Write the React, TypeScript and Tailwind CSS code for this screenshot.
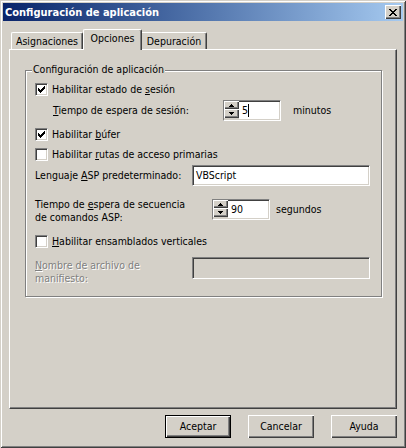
import React from 'react'

const sunken =
  'border border-t-[#808080] border-l-[#808080] border-b-white border-r-white shadow-[inset_1px_1px_0_#404040,inset_-1px_-1px_0_#d4d0c8]'
const raised =
  'shadow-[inset_1px_1px_0_#ffffff,inset_-1px_-1px_0_#404040,inset_-2px_-2px_0_#808080]'

function CheckBox({ checked }: { checked?: boolean }) {
  return (
    <span className={`w-[13px] h-[13px] shrink-0 bg-white flex items-center justify-center ${sunken}`}>
      {checked && (
        <svg width="7" height="7" viewBox="0 0 7 7" shapeRendering="crispEdges">
          <path
            d="M0 2h1v3H0zM1 3h1v3H1zM2 4h1v3H2zM3 3h1v3H3zM4 2h1v3H4zM5 1h1v3H5zM6 0h1v3H6z"
            fill="#000"
          />
        </svg>
      )}
    </span>
  )
}

function Arrow({ up }: { up?: boolean }) {
  return (
    <svg width="5" height="3" viewBox="0 0 5 3" shapeRendering="crispEdges">
      <path d={up ? 'M2 0h1v1H2zM1 1h3v1H1zM0 2h5v1H0z' : 'M0 0h5v1H0zM1 1h3v1H1zM2 2h1v1H2z'} fill="#000" />
    </svg>
  )
}

function Spinner({ value, caret }: { value: string; caret?: boolean }) {
  return (
    <div className={`w-[58px] h-[21px] shrink-0 bg-white flex ${sunken}`}>
      <div className="w-[15px] flex flex-col bg-[#d4d0c8]">
        <div className={`h-[8px] flex items-center justify-center ${raised}`}>
          <Arrow up />
        </div>
        <div className={`h-[9px] flex items-center justify-center ${raised}`}>
          <Arrow />
        </div>
      </div>
      <div className="flex items-center pl-[3px]">
        <span>{value}</span>
        {caret && <span className="w-px h-[13px] bg-black" />}
      </div>
    </div>
  )
}

function Check({ checked, children }: { checked?: boolean; children: React.ReactNode }) {
  return (
    <div className="h-[13px] flex items-center gap-[4px]">
      <CheckBox checked={checked} />
      <span>{children}</span>
    </div>
  )
}

function Button({ label, primary }: { label: string; primary?: boolean }) {
  return (
    <div
      className={`w-[66px] h-[23px] flex items-center justify-center ${
        primary ? 'border border-black' : ''
      } ${raised}`}>
      {label}
    </div>
  )
}

export default function App() {
  return (
    <div className="w-[406px] h-[448px] bg-[#d4d0c8] p-[3px] flex flex-col text-[10.5px] leading-[13px] text-black font-['DejaVu_Sans_Condensed','Liberation_Sans',Arial,sans-serif] shadow-[inset_1px_1px_0_#d4d0c8,inset_-1px_-1px_0_#404040,inset_2px_2px_0_#ffffff,inset_-2px_-2px_0_#808080]">
      {/* Title bar */}
      <div className="h-[18px] flex items-center justify-between pl-[2px] pr-[2px] bg-gradient-to-r from-[#0a246a] to-[#a6caf0]">
        <span className="text-white font-bold text-[11px]">Configuración de aplicación</span>
        <div className={`w-[16px] h-[14px] bg-[#d4d0c8] flex items-center justify-center ${raised}`}>
          <svg width="8" height="7" viewBox="0 0 8 7" shapeRendering="crispEdges">
            <path
              d="M0 0h2v1H0zM6 0h2v1H6zM1 1h2v1H1zM5 1h2v1H5zM2 2h4v1H2zM3 3h2v1H3zM2 4h4v1H2zM1 5h2v1H1zM5 5h2v1H5zM0 6h2v1H0zM6 6h2v1H6z"
              fill="#000"
            />
          </svg>
        </div>
      </div>

      {/* Tabs */}
      <div className="mt-[8px] ml-[8px] h-[20px] flex items-end">
        <div className="w-[72px] h-[17px] pt-[2px] flex justify-center border-l border-t border-white border-r border-r-[#404040] rounded-t-[2px] shadow-[inset_-1px_0_0_#808080]">
          Asignaciones
        </div>
        <div className="relative z-10 w-[59px] h-[21px] -mb-px pt-[2px] flex justify-center bg-[#d4d0c8] border-l border-t border-white border-r border-r-[#404040] rounded-t-[2px] shadow-[inset_-1px_0_0_#808080]">
          Opciones
        </div>
        <div className="w-[65px] h-[17px] pt-[2px] flex justify-center border-t border-white border-r border-r-[#404040] rounded-tr-[2px] shadow-[inset_-1px_0_0_#808080]">
          Depuración
        </div>
      </div>

      {/* Tab panel */}
      <div className="mx-[6px] w-[388px] h-[360px] border border-t-white border-l-white border-r-[#404040] border-b-[#404040] shadow-[inset_-1px_-1px_0_#808080]">
        <div className="relative mt-[20px] ml-[15px] w-[357px] h-[227px] border border-[#808080] shadow-[inset_1px_1px_0_#ffffff,1px_1px_0_#ffffff] pl-[9px]">
          <span className="absolute top-[-8px] left-[6px] px-[1px] bg-[#d4d0c8]">Configuración de aplicación</span>

          <div className="mt-[12px]">
            <Check checked>
              Habilitar estado de <span className="underline">s</span>esión
            </Check>
          </div>

          <div className="mt-[4px] h-[21px] flex items-center">
            <span className="w-[188px] pl-[18px]">
              <span className="underline">T</span>iempo de espera de sesión:
            </span>
            <Spinner value="5" caret />
            <span className="ml-[12px]">minutos</span>
          </div>

          <div className="mt-[7px]">
            <Check checked>
              Habilitar <span className="underline">b</span>úfer
            </Check>
          </div>

          <div className="mt-[7px]">
            <Check>
              Habilitar <span className="underline">r</span>utas de acceso primarias
            </Check>
          </div>

          <div className="mt-[4px] h-[21px] flex items-center">
            <span className="w-[157px]">
              Lenguaje <span className="underline">A</span>SP predeterminado:
            </span>
            <div className={`w-[178px] h-[21px] bg-white flex items-center pl-[3px] ${sunken}`}>VBScript</div>
          </div>

          <div className="mt-[12px] h-[26px] flex items-start">
            <span className="w-[177px]">
              Tiempo de <span className="underline">e</span>spera de secuencia
              <br />
              de comandos ASP:
            </span>
            <div className="mt-[1px] flex items-center">
              <Spinner value="90" />
              <span className="ml-[6px]">segundos</span>
            </div>
          </div>

          <div className="mt-[11px]">
            <Check>
              <span className="underline">H</span>abilitar ensamblados verticales
            </Check>
          </div>

          <div className="mt-[9px] flex items-start">
            <span className="w-[157px] mt-[2px] text-[#808080] [text-shadow:1px_1px_0_#ffffff]">
              <span className="underline">N</span>ombre de archivo de
              <br />
              manifiesto:
            </span>
            <div className={`w-[178px] h-[22px] bg-[#d4d0c8] ${sunken}`} />
          </div>
        </div>
      </div>

      {/* Buttons */}
      <div className="mt-[6px] flex justify-end gap-[17px] pr-[6px]">
        <Button label="Aceptar" primary />
        <Button label="Cancelar" />
        <Button label="Ayuda" />
      </div>
    </div>
  )
}
